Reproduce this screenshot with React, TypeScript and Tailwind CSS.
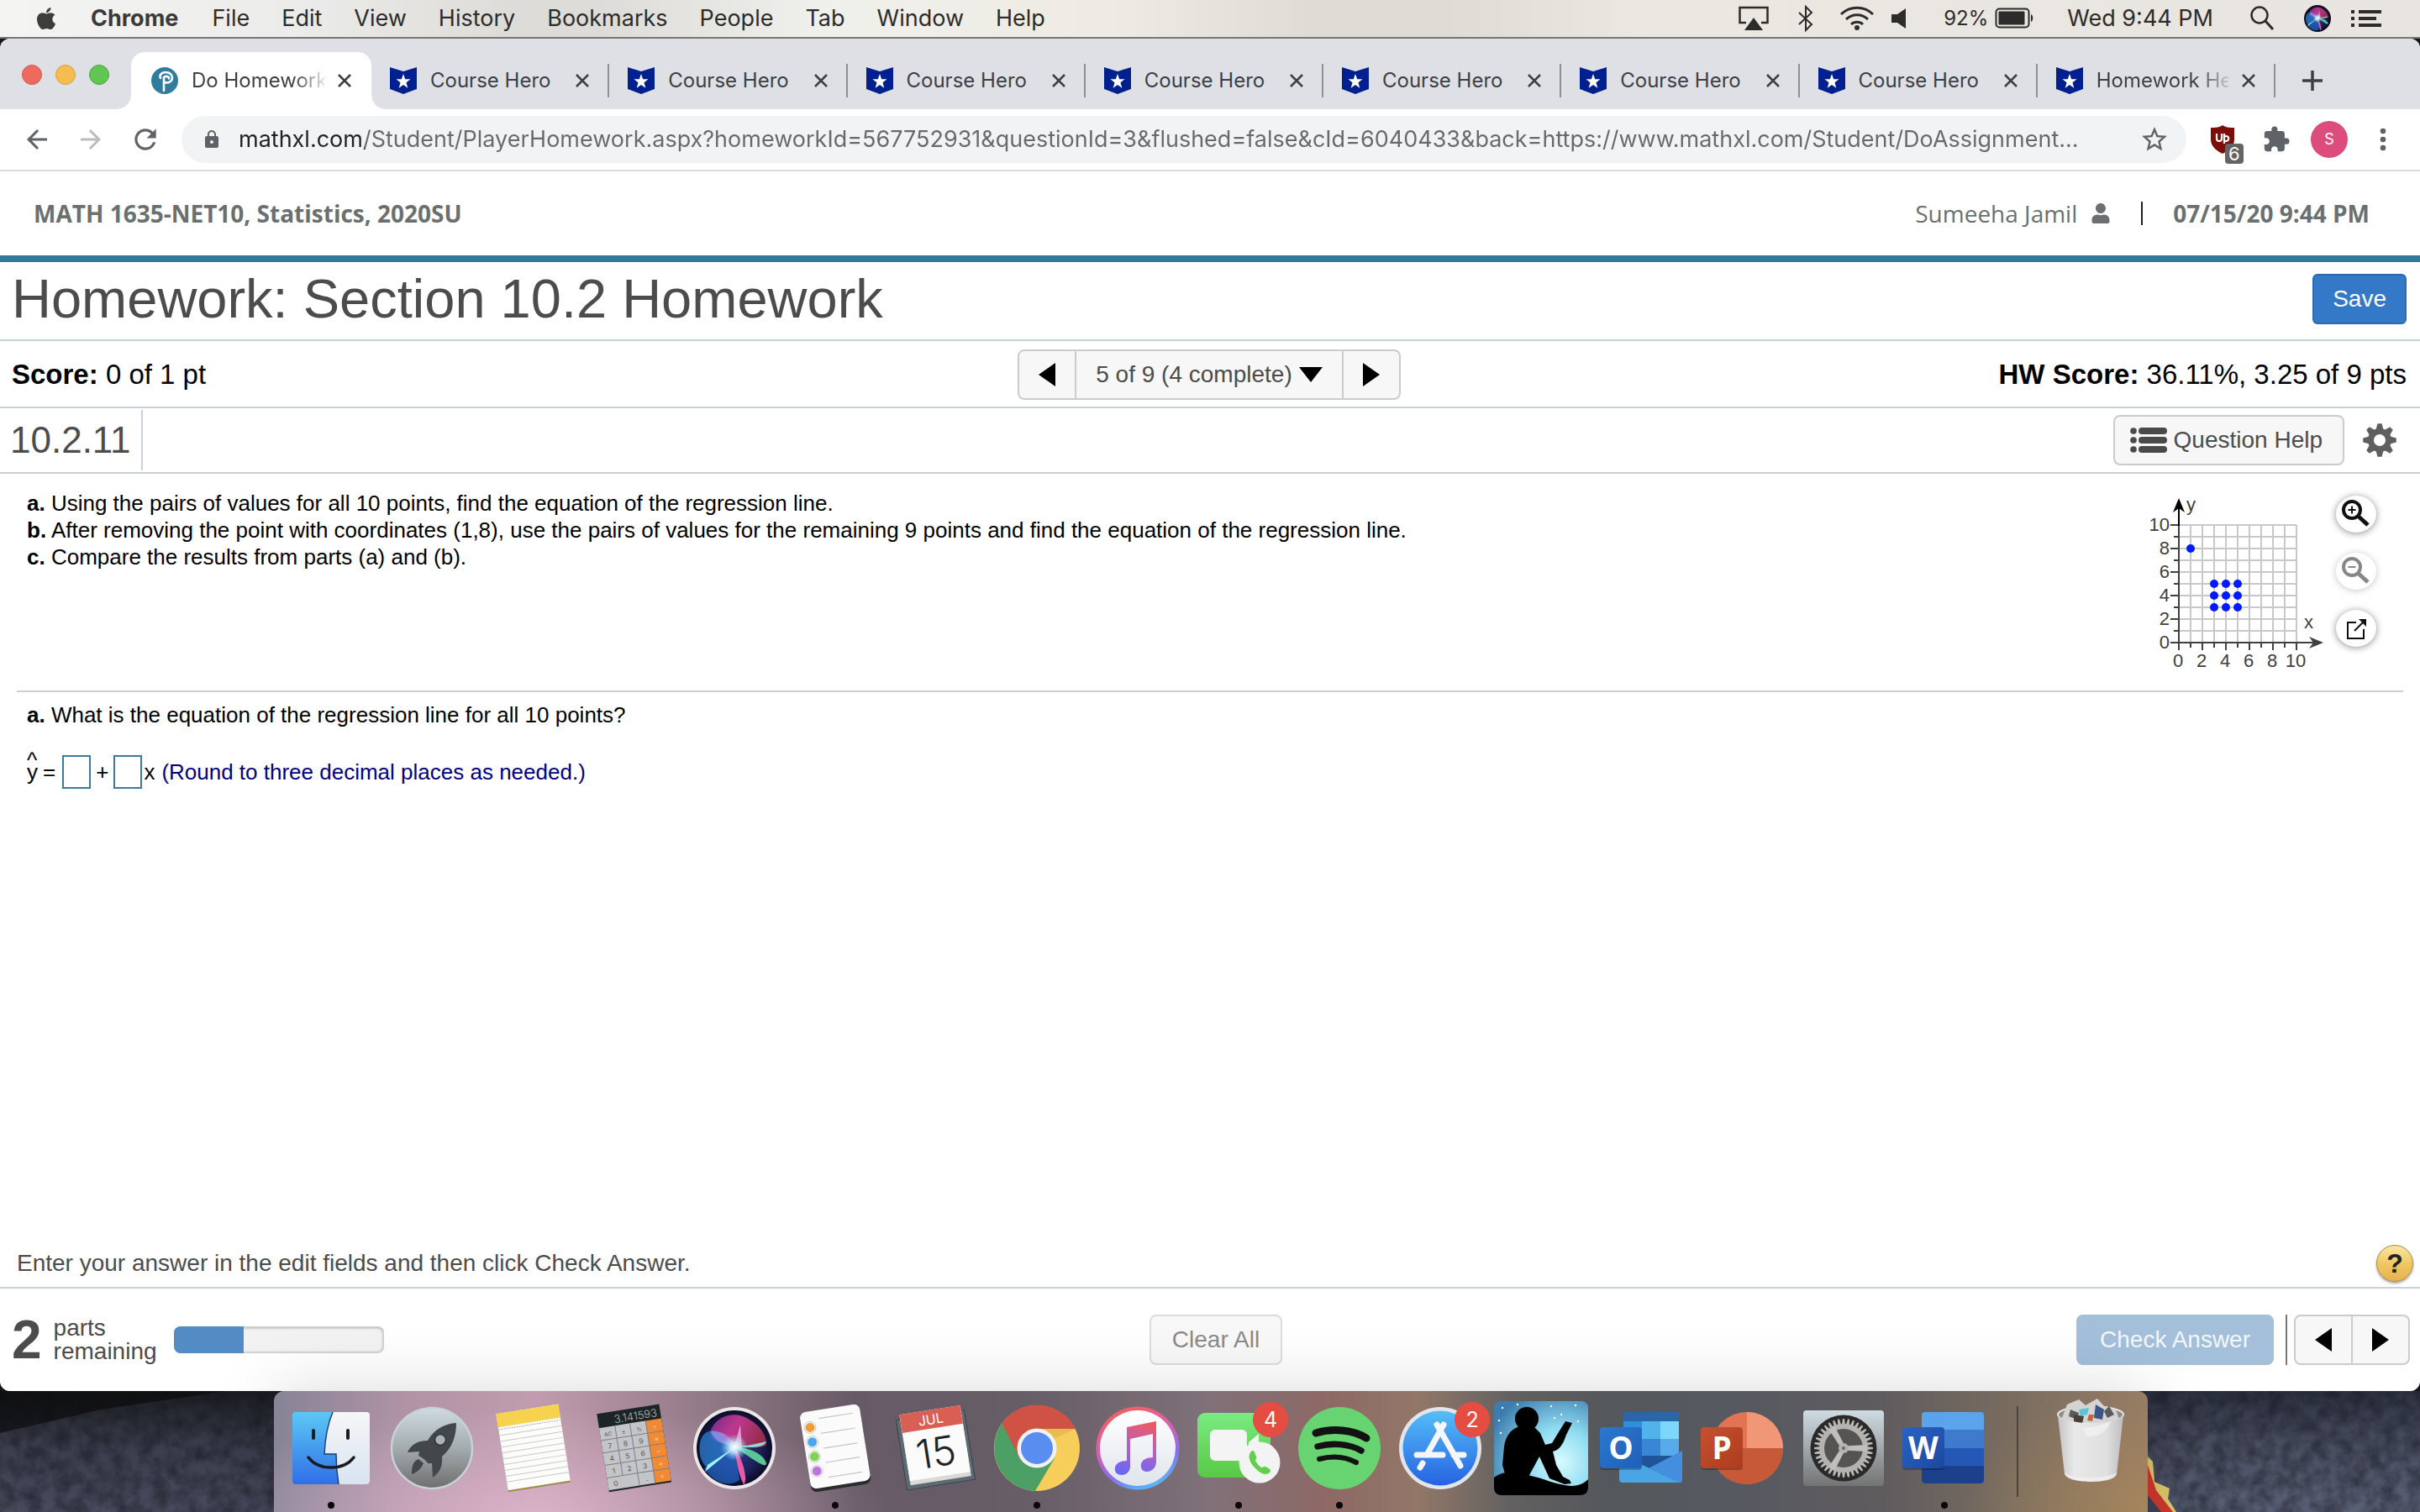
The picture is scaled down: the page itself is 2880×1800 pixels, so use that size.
import type { ReactNode } from "react";
import { FaApple, FaUser } from "react-icons/fa";
import { MdExtension, MdLock, MdStarBorder, MdRefresh, MdArrowBack, MdArrowForward } from "react-icons/md";

/* ---------- small shared drawings ---------- */

function SiriOrb({ id }: { id: string }) {
  return (
    <g>
      <defs>
        <radialGradient id={`${id}-a`} cx="50%" cy="50%" r="50%">
          <stop offset="0" stopColor="#2c3f8f" />
          <stop offset="0.7" stopColor="#1b1f55" />
          <stop offset="1" stopColor="#0c0b26" />
        </radialGradient>
        <radialGradient id={`${id}-b`} cx="50%" cy="50%" r="50%">
          <stop offset="0" stopColor="#fff" />
          <stop offset="0.35" stopColor="#d8f6ff" stopOpacity="0.85" />
          <stop offset="1" stopColor="#8fd8ff" stopOpacity="0" />
        </radialGradient>
        <linearGradient id={`${id}-c`} x1="0" y1="0" x2="1" y2="0.4">
          <stop offset="0" stopColor="#7a2c8f" />
          <stop offset="0.5" stopColor="#cf3a94" />
          <stop offset="1" stopColor="#a5304f" />
        </linearGradient>
      </defs>
      <circle cx="60" cy="68" r="45" fill={`url(#${id}-a)`} />
      <path d="M31 50C36 30 60 22 78 34c12 7 20 18 20 29 0 5-20 5-38 3C50 62 34 64 31 50Z" fill={`url(#${id}-c)`} opacity="0.9" />
      <path d="M20 58c4-12 16-14 26-6l14 16-34 22C18 82 17 68 20 58Z" fill="#2a7fd0" opacity="0.75" />
      <path d="M24 92 60 66l6 40c-14 10-32 2-42-14Z" fill="#2467c9" opacity="0.7" />
      <path d="M60 66c18 2 34 8 38 20 0 6-10 0-38-20Z" fill="#5fd7a0" opacity="0.9" />
      <path d="M60 66c14 0 30-4 38-6-2 8-20 8-38 6Z" fill="#8fe9df" opacity="0.9" />
      <path d="M60 66c2 16 5 34 11 45 4-2 3-22-11-45Z" fill="#e65aa8" />
      <path d="M60 66 67 40l2 28Z" fill="#f2b4e4" opacity="0.8" />
      <path d="M62 66 25 96l3-8Z" fill="#9ff3ff" />
      <path d="M32 48c14-2 26 8 28 18-12-2-24-6-28-18Z" fill="#b9a3f0" opacity="0.55" />
      <circle cx="60" cy="67" r="16" fill={`url(#${id}-b)`} />
    </g>
  );
}

function Banner() {
  return (
    <svg viewBox="0 0 32 32" className="size-8 shrink-0" aria-hidden="true">
      <path d="M0 0 16 5 32 0V26L16 32 0 26Z" fill="#00208f" />
      <path d="m16 8 2.2 6.3h6.3l-5 4 1.8 6.4L16 21l-5.300 3.700 1.800-6.400-5-4h6.300Z" fill="#fff" />
    </svg>
  );
}

function Triangle({ dir, className }: { dir: "left" | "right" | "down"; className: string }) {
  const d = dir === "left" ? "M20 0V28L0 14Z" : dir === "right" ? "M0 0V28L20 14Z" : "M0 0H28L14 18Z";
  return (
    <svg viewBox={dir === "down" ? "0 0 28 18" : "0 0 20 28"} className={className} aria-hidden="true">
      <path d={d} fill="#000" />
    </svg>
  );
}

/* ---------- menu bar ---------- */

const menus = ["File", "Edit", "View", "History", "Bookmarks", "People", "Tab", "Window", "Help"];

function MenuBar() {
  return (
    <header className="flex h-11 items-center bg-[linear-gradient(90deg,#f4f4f3_0%,#ececea_12%,#dddcd8_21%,#dddcd8_25%,#f0f1ec_34%,#efeae3_46%,#e1dbd5_54%,#e1dbd5_60%,#ebe7e1_68%,#e8e5e1_100%)] pl-10 pr-[46px] text-[27px] leading-8 text-[#2d2c2b]">
      <FaApple className="size-[30px] text-[#3d3d3d]" />
      <nav className="ml-[38px] flex items-center gap-[38px]">
        <button className="mr-0.5 font-bold text-[#3a3a39]">Chrome</button>
        {menus.map((m) => (
          <button key={m}>{m}</button>
        ))}
      </nav>
      <div className="ml-auto flex items-center">
        <svg viewBox="0 0 36 30" className="h-[30px] w-9" aria-hidden="true">
          <path d="M9 20H1.500V2H34.500V20H27" fill="none" stroke="#2d2c2b" strokeWidth="2.500" />
          <path d="M18 14 29 29H7Z" fill="#2d2c2b" />
        </svg>
        <svg viewBox="0 0 20 32" className="ml-[34px] h-8 w-5" aria-hidden="true">
          <path d="m2 9 15 14-7 7V2l7 7L2 23" fill="none" stroke="#2d2c2b" strokeWidth="2" />
        </svg>
        <svg viewBox="0 0 42 30" className="ml-[30px] h-[30px] w-[42px]" aria-hidden="true">
          <g fill="none" stroke="#2d2c2b" strokeWidth="3">
            <path d="M2 10a27 27 0 0 1 38 0" />
            <path d="M8 16a18.500 18.500 0 0 1 26 0" />
            <path d="M14 22a10 10 0 0 1 14 0" />
          </g>
          <circle cx="21" cy="26" r="3" fill="#2d2c2b" />
        </svg>
        <svg viewBox="0 0 18 26" className="ml-5 h-[26px] w-[18px]" aria-hidden="true">
          <path d="M0 8h7L17 1v24L7 18H0Z" fill="#2d2c2b" />
        </svg>
        <span className="ml-11 text-2xl">92%</span>
        <svg viewBox="0 0 46 26" className="ml-2 h-[26px] w-[46px]" aria-hidden="true">
          <rect x="1.500" y="1.500" width="39" height="22" rx="4" fill="none" stroke="#2d2c2b" strokeWidth="2" />
          <rect x="4.500" y="4.500" width="31" height="16" rx="1" fill="#2d2c2b" />
          <path d="M43 8v9c3-1 3-8 0-9Z" fill="#2d2c2b" />
        </svg>
        <span className="ml-10">Wed 9:44 PM</span>
        <svg viewBox="0 0 28 30" className="ml-11 h-[30px] w-7" aria-hidden="true">
          <circle cx="11" cy="11" r="9.500" fill="none" stroke="#2d2c2b" strokeWidth="2.500" />
          <path d="m18 18 9 10" stroke="#2d2c2b" strokeWidth="3" />
        </svg>
        <svg viewBox="12 20 96 96" className="ml-9 size-8" aria-hidden="true">
          <circle cx="60" cy="68" r="48" fill="#111" />
          <SiriOrb id="menu-siri" />
        </svg>
        <svg viewBox="0 0 36 20" className="ml-6 h-5 w-9" aria-hidden="true">
          <path d="M0 2h4M0 10h4M0 18h4M9 2h27M9 10h21M9 18h27" stroke="#2d2c2b" strokeWidth="4" />
        </svg>
      </div>
    </header>
  );
}

/* ---------- browser tabs and toolbar ---------- */

function CloseMark() {
  return (
    <svg viewBox="0 0 16 16" className="size-4" aria-hidden="true">
      <path d="m1 1 14 14M15 1 1 15" stroke="#3c3f43" strokeWidth="2.500" />
    </svg>
  );
}

const tabs = ["Course Hero", "Course Hero", "Course Hero", "Course Hero", "Course Hero", "Course Hero", "Course Hero", "Homework Help"];

function TabStrip() {
  return (
    <div className="flex h-[84px] items-end bg-[#dee0e6] pl-[26px]">
      <div className="mb-[29px] flex gap-4">
        <span className="size-6 rounded-full border border-[#d8574c] bg-[#ee6a5f]" />
        <span className="size-6 rounded-full border border-[#d9a03c] bg-[#f5bd4f]" />
        <span className="size-6 rounded-full border border-[#4ba73d] bg-[#61c554]" />
      </div>
      <div className="relative ml-[26px] flex h-[68px] w-[286px] items-center rounded-t-2xl bg-white pl-6 pr-6">
        <span className="absolute bottom-0 right-full size-4 bg-[radial-gradient(circle_at_0_0,transparent_15px,white_16px)]" />
        <span className="absolute bottom-0 left-full size-4 bg-[radial-gradient(circle_at_100%_0,transparent_15px,white_16px)]" />
        <svg viewBox="0 0 32 32" className="size-8 shrink-0" aria-hidden="true">
          <circle cx="16" cy="16" r="16" fill="#2f7c9f" />
          <path d="M11 13c-2-4 2-7 6-7 5 0 8 3 8 6.500S21 20 16 18M15 28V12c3-2 6-1 6 1.500" fill="none" stroke="#fff" strokeWidth="2.600" strokeLinecap="round" />
        </svg>
        <button className="ml-4 flex-1 overflow-hidden whitespace-nowrap bg-[linear-gradient(90deg,#3c3f43_76%,transparent_104%)] bg-clip-text text-left text-[24px] leading-8 text-transparent">
          Do Homework
        </button>
        <button aria-label="Close tab" className="ml-4">
          <CloseMark />
        </button>
      </div>
      <div className="flex flex-1">
        {tabs.map((t, i) => (
          <div key={i} className="flex h-[68px] min-w-0 flex-1 items-center pl-[22px]">
            <Banner />
            <button
              className={
                i === 7
                  ? "ml-4 flex-1 overflow-hidden whitespace-nowrap bg-[linear-gradient(90deg,#3c3f43_76%,transparent_104%)] bg-clip-text text-left text-[24px] leading-8 text-transparent"
                  : "ml-4 flex-1 overflow-hidden whitespace-nowrap text-left text-[24px] leading-8 text-[#3c3f43]"
              }
            >
              {t}
            </button>
            <button aria-label="Close tab" className="ml-4">
              <CloseMark />
            </button>
            <span className="ml-[22px] h-10 w-0.5 bg-[#8d9095]" />
          </div>
        ))}
      </div>
      <button aria-label="New tab" className="mb-[22px] ml-8 mr-[116px]">
        <svg viewBox="0 0 24 24" className="size-6" aria-hidden="true">
          <path d="M12 0v24M0 12h24" stroke="#3c3f43" strokeWidth="3.500" />
        </svg>
      </button>
    </div>
  );
}

function Toolbar() {
  return (
    <div className="flex h-[74px] items-center border-b-2 border-[#dadce0] bg-white pl-[26px] pr-10 text-[#5f6368]">
      <button aria-label="Back">
        <MdArrowBack className="size-9" />
      </button>
      <button aria-label="Forward" className="ml-7 text-[#babcbe]">
        <MdArrowForward className="size-9" />
      </button>
      <button aria-label="Reload" className="ml-7">
        <MdRefresh className="size-[38px]" />
      </button>
      <div className="ml-6 flex h-14 flex-1 items-center rounded-full bg-[#f1f3f4] pl-6 pr-5">
        <MdLock className="size-6" />
        <input
          aria-label="Address"
          readOnly
          value="mathxl.com/Student/PlayerHomework.aspx?homeworkId=567752931&questionId=3&flushed=false&cId=6040433&back=https://www.mathxl.com/Student/DoAssignment..."
          className="ml-5 min-w-0 flex-1 bg-[linear-gradient(90deg,#202124_150px,#66696d_150px)] bg-clip-text text-[27px] leading-9 text-transparent outline-none"
        />
        <button aria-label="Bookmark this page">
          <MdStarBorder className="size-9" />
        </button>
      </div>
      <button aria-label="uBlock Origin" className="relative ml-7">
        <svg viewBox="0 0 30 34" className="h-[34px] w-[30px]" aria-hidden="true">
          <path d="M15 0c4 3 9 3 14 3v14c0 8-6 13-14 17C7 30 1 25 1 17V3c5 0 10 0 14-3Z" fill="#7c0d08" />
          <path d="M8 10v6c0 4 6 4 6 0v-6M17 10v12M17 14a3 3 0 1 1 0 4" fill="none" stroke="#fff" strokeWidth="2.200" />
        </svg>
        <span className="absolute -bottom-3 left-[18px] rounded bg-[#646464] px-1 text-[22px] leading-6 text-white">6</span>
      </button>
      <button aria-label="Extensions" className="ml-8">
        <MdExtension className="size-[34px]" />
      </button>
      <button aria-label="Profile" className="ml-6 flex size-11 items-center justify-center rounded-full bg-[#dc4c7c] text-[18px] leading-6 text-white">
        S
      </button>
      <button aria-label="Browser menu" className="ml-[38px]">
        <svg viewBox="0 0 8 28" className="h-7 w-2" aria-hidden="true">
          <circle cx="4" cy="4" r="3.300" fill="#5f6368" />
          <circle cx="4" cy="14" r="3.300" fill="#5f6368" />
          <circle cx="4" cy="24" r="3.300" fill="#5f6368" />
        </svg>
      </button>
    </div>
  );
}

/* ---------- scatter plot ---------- */

const points = [
  [1, 8],
  [3, 3], [4, 3], [5, 3],
  [3, 4], [4, 4], [5, 4],
  [3, 5], [4, 5], [5, 5],
];
const eleven = Array.from({ length: 11 }, (_, i) => i);
const evens = [0, 2, 4, 6, 8, 10];

function ScatterPlot() {
  const ox = 38;
  const oy = 175;
  return (
    <svg viewBox="0 0 215 214" className="h-[214px] w-[215px]" role="img" aria-label="Scatter plot of ten points">
      {eleven.map((i) => (
        <g key={i} stroke="#c8c8c8" strokeWidth="2">
          <path d={`M${ox + i * 14} ${oy}V35`} />
          <path d={`M${ox} ${oy - i * 14}H178`} />
        </g>
      ))}
      <g stroke="#404040" strokeWidth="2">
        <path d={`M28 ${oy}H200M${ox} 184V36`} />
        {eleven.map((i) => (
          <path key={i} d={`M${ox + i * 14} ${oy}v${i % 2 ? 6 : 9}M${ox} ${oy - i * 14}h${i % 2 ? -6 : -10}`} />
        ))}
      </g>
      <path d="M38 36V12" stroke="#000" strokeWidth="2" />
      <path d="M38 3 45 20 38 15 31 20Z" fill="#000" />
      <path d="M210 175 193 182 198 175 193 168Z" fill="#404040" />
      {points.map(([x, y]) => (
        <circle key={`${x}-${y}`} cx={ox + x * 14} cy={oy - y * 14} r="5" fill="#0019ff" />
      ))}
      <g fill="#404040" fontFamily="Liberation Sans, Arial, sans-serif" fontSize="22">
        {evens.map((n) => (
          <text key={n} x="27" y={oy - n * 14 + 7} textAnchor="end">
            {n}
          </text>
        ))}
        {evens.map((n) => (
          <text key={n} x={ox + n * 14 - 1} y="204" textAnchor="middle">
            {n}
          </text>
        ))}
        <text x="47" y="18">y</text>
        <text x="187" y="158">x</text>
      </g>
    </svg>
  );
}

function RoundButton({ label, faded, children }: { label: string; faded?: boolean; children: ReactNode }) {
  return (
    <button
      aria-label={label}
      className={
        faded
          ? "flex h-11 w-12 items-center justify-center rounded-[50%] bg-white opacity-50 shadow-[0_1px_8px_rgba(0,0,0,0.45)]"
          : "flex h-11 w-12 items-center justify-center rounded-[50%] bg-white shadow-[0_1px_8px_rgba(0,0,0,0.45)]"
      }
    >
      <svg viewBox="0 0 34 34" className="size-[34px]" aria-hidden="true">
        {children}
      </svg>
    </button>
  );
}

/* ---------- homework page ---------- */

function ListIcon() {
  return (
    <svg viewBox="0 0 44 30" className="h-[30px] w-11" aria-hidden="true">
      {[4, 15, 26].map((y) => (
        <g key={y} fill="#4a4a4a" stroke="#4a4a4a">
          <circle cx="4" cy={y} r="3.800" stroke="none" />
          <path d={`M14 ${y}H40`} strokeWidth="8" strokeLinecap="round" />
        </g>
      ))}
    </svg>
  );
}

function Gear() {
  return (
    <svg viewBox="0 0 40 40" className="size-10" aria-hidden="true">
      {[0, 45, 90, 135, 180, 225, 270, 315].map((a) => (
        <path key={a} d="M16 9 18 1h4l2 8Z" fill="#5f5f5f" stroke="#5f5f5f" strokeWidth="1.500" transform={`rotate(${a} 20 20)`} />
      ))}
      <circle cx="20" cy="20" r="10.500" fill="none" stroke="#5f5f5f" strokeWidth="7" />
    </svg>
  );
}

function Homework() {
  return (
    <main className="flex flex-1 flex-col rounded-b-xl bg-white font-['Liberation_Sans',Arial,sans-serif] text-black">
      <div className="flex h-[108px] items-center justify-between border-b-8 border-[#31799a] pl-10 pr-[60px] font-['Open_Sans',sans-serif] text-[28px] leading-9 text-[#6a7070]">
        <strong>MATH 1635-NET10, Statistics, 2020SU</strong>
        <div className="flex items-center">
          <a href="#profile" className="flex items-center gap-4">
            Sumeeha Jamil
            <FaUser className="size-6" />
          </a>
          <span className="ml-9 h-7 w-0.5 bg-[#231f20]" />
          <strong className="ml-9">07/15/20 9:44 PM</strong>
        </div>
      </div>

      <div className="flex h-[94px] items-center justify-between border-b-2 border-[#cbd0de] pb-1 pl-3.5 pr-4">
        <h1 className="text-[65px] leading-[72px] text-[#4c4c4c]">Homework: Section 10.2 Homework</h1>
        <button className="h-[60px] rounded-md border-2 border-[#2c69b0] bg-[#3379c7] px-[22px] text-[28px] leading-8 text-white">Save</button>
      </div>

      <div className="grid h-20 grid-cols-[1fr_auto_1fr] items-center border-b-2 border-[#cbd0de] pl-3.5 pr-4 pt-0.5 text-[33px] leading-10">
        <p>
          <strong>Score:</strong> 0 of 1 pt
        </p>
        <div className="flex h-[60px] rounded-lg border-2 border-[#ccc] bg-[#f7f7f7] text-[28px] leading-8 text-[#4c4c4c]">
          <button aria-label="Previous question" className="flex w-[66px] items-center justify-center">
            <Triangle dir="left" className="h-7 w-5" />
          </button>
          <button className="flex items-center gap-2 border-x-2 border-[#ccc] px-[23px]">
            5 of 9 (4 complete)
            <Triangle dir="down" className="h-[18px] w-7" />
          </button>
          <button aria-label="Next question" className="flex w-[66px] items-center justify-center">
            <Triangle dir="right" className="h-7 w-5" />
          </button>
        </div>
        <p className="text-right">
          <strong>HW Score:</strong> 36.11%, 3.25 of 9 pts
        </p>
      </div>

      <div className="flex h-[78px] items-center border-b-2 border-[#cbd0de] pl-3 pr-7">
        <h2 className="flex h-[72px] items-center border-r-2 border-[#cbd0de] pr-3 text-[44px] leading-[48px] text-[#4c4c4c]">10.2.11</h2>
        <button className="ml-auto flex h-[60px] items-center gap-2 rounded-lg border-2 border-[#ccc] bg-[#f7f7f7] pl-[18px] pr-6 text-[28px] leading-8 text-[#4c4c4c]">
          <ListIcon />
          Question Help
        </button>
        <button aria-label="Settings" className="ml-[22px]">
          <Gear />
        </button>
      </div>

      <section className="mx-5 flex h-[260px] justify-between border-b-2 border-[#cbd0de] pl-3 pr-8 text-[26px] leading-8">
        <div className="pt-[19px]">
          <p>
            <strong>a.</strong> Using the pairs of values for all 10 points, find the equation of the regression line.
          </p>
          <p>
            <strong>b.</strong> After removing the point with coordinates (1,8), use the pairs of values for the remaining 9 points and find the equation of the regression line.
          </p>
          <p>
            <strong>c.</strong> Compare the results from parts (a) and (b).
          </p>
        </div>
        <div className="flex items-start gap-2.5 pt-[26px]">
          <ScatterPlot />
          <div className="flex flex-col gap-6">
            <RoundButton label="Zoom in">
              <g fill="none" stroke="#111">
                <circle cx="12" cy="12" r="10" strokeWidth="4" />
                <path d="m20 20 11 10" strokeWidth="5" />
                <path d="M12 7.500v9M7.500 12h9" strokeWidth="2" />
              </g>
            </RoundButton>
            <RoundButton label="Zoom out" faded>
              <g fill="none" stroke="#111">
                <circle cx="12" cy="12" r="10" strokeWidth="4" />
                <path d="m20 20 11 10" strokeWidth="5" />
                <path d="M7.500 12h9" strokeWidth="2" />
              </g>
            </RoundButton>
            <RoundButton label="Open in new window">
              <path d="M17 10H7V29H26V18" fill="none" stroke="#111" strokeWidth="2" />
              <path d="M15 20 26 9" stroke="#111" strokeWidth="2" />
              <path d="M20 6H29V15Z" fill="#111" />
            </RoundButton>
          </div>
        </div>
      </section>

      <section className="px-8 pt-[11px] text-[26px] leading-8">
        <p>
          <strong>a.</strong> What is the equation of the regression line for all 10 points?
        </p>
        <div className="mt-8 flex items-center">
          <span className="relative">
            y<span className="absolute -top-3.5 left-0">^</span>
          </span>
          <span className="ml-1.5">=</span>
          <input aria-label="Intercept" className="ml-2 h-10 w-[34px] border-2 border-[#3a7c9c] bg-white" />
          <span className="mx-1.5">+</span>
          <input aria-label="Slope" className="h-10 w-[34px] border-2 border-[#3a7c9c] bg-white" />
          <span className="ml-0.5">x</span>
          <span className="ml-2 text-[#000080]">(Round to three decimal places as needed.)</span>
        </div>
      </section>

      <div className="mt-auto flex h-[60px] items-center justify-between border-b-2 border-[#cbd0de] pl-5 pr-2 pt-0.5 text-[28px] leading-8 text-[#4c4c4c]">
        <p>Enter your answer in the edit fields and then click Check Answer.</p>
        <button
          aria-label="Help"
          className="flex size-11 items-center justify-center rounded-full border border-[#a98644] bg-[linear-gradient(180deg,#fbe7a4,#f0c862_50%,#e5b352)] text-[32px] font-bold leading-8 text-[#222] shadow-[0_2px_3px_rgba(0,0,0,0.35)]"
        >
          ?
        </button>
      </div>

      <footer className="grid h-[122px] grid-cols-[1fr_auto_1fr] items-center pl-3.5 pr-3 text-[28px] leading-7 text-[#4c4c4c]">
        <div className="flex items-center">
          <strong className="text-[64px] leading-[64px]">2</strong>
          <div className="ml-3.5">
            parts
            <br />
            remaining
          </div>
          <div role="progressbar" aria-label="Parts completed" aria-valuenow={1} aria-valuemin={0} aria-valuemax={3} className="ml-5 h-8 w-[250px] overflow-hidden rounded-lg bg-[#f2f2f2] shadow-[inset_0_0_2px_2px_#cfcfcf,inset_0_2px_3px_#b0b0b0]">
            <div className="h-full w-1/3 bg-[#538bc5]" />
          </div>
        </div>
        <button className="ml-3 h-[60px] rounded-lg border-2 border-[#dcdcdc] bg-[#f8f8f8] px-[25px] leading-8 text-[#8a8a8a]">Clear All</button>
        <div className="flex items-center justify-end">
          <button className="h-[60px] rounded-lg bg-[#a3bfda] px-7 leading-8 text-[#f3f7fb]">Check Answer</button>
          <span className="ml-3.5 h-[60px] w-0.5 bg-[#777]" />
          <div className="ml-2 flex h-[60px] rounded-lg border-2 border-[#ccc] bg-[#f7f7f7]">
            <button aria-label="Previous part" className="flex w-[68px] items-center justify-center border-r-2 border-[#ccc]">
              <Triangle dir="left" className="h-7 w-5" />
            </button>
            <button aria-label="Next part" className="flex w-[66px] items-center justify-center">
              <Triangle dir="right" className="h-7 w-5" />
            </button>
          </div>
        </div>
      </footer>
    </main>
  );
}

/* ---------- dock icons, all drawn on a 120 x 144 board centred at (60, 68) ---------- */

function Badge({ n }: { n: string }) {
  return (
    <g>
      <circle cx="98" cy="34" r="21" fill="#e54d42" />
      <text x="98" y="43" textAnchor="middle" fontFamily="Inter, sans-serif" fontSize="25" fill="#fff">
        {n}
      </text>
    </g>
  );
}

function Finder() {
  return (
    <g>
      <defs>
        <linearGradient id="fd-l" x1="0" y1="0" x2="0" y2="1">
          <stop offset="0" stopColor="#5cc8f5" />
          <stop offset="1" stopColor="#2f6fe8" />
        </linearGradient>
        <linearGradient id="fd-r" x1="0" y1="0" x2="0" y2="1">
          <stop offset="0" stopColor="#f6f6f7" />
          <stop offset="1" stopColor="#d9e4f1" />
        </linearGradient>
      </defs>
      <rect x="14" y="25" width="92" height="86" rx="4" fill="url(#fd-l)" />
      <path d="M62 25h40a4 4 0 0 1 4 4v78a4 4 0 0 1-4 4H69c-2-12-3-24-3-36H52c1-20 4-36 10-50Z" fill="url(#fd-r)" />
      <path d="M62 25c-6 14-9 30-10 50h14c0 12 1 24 3 36" fill="none" stroke="#1d3f78" strokeWidth="1.500" />
      <path d="M39 47v9M80 47v9" stroke="#1b1b1f" strokeWidth="4" strokeLinecap="round" />
      <path d="M33 79c12 16 42 16 54 0" fill="none" stroke="#1b1b1f" strokeWidth="3.500" strokeLinecap="round" />
    </g>
  );
}

function Launchpad() {
  return (
    <g>
      <defs>
        <linearGradient id="lp" x1="0" y1="0" x2="0" y2="1">
          <stop offset="0" stopColor="#cfdbe2" />
          <stop offset="0.5" stopColor="#a3abae" />
          <stop offset="1" stopColor="#6f6f6d" />
        </linearGradient>
      </defs>
      <circle cx="60" cy="68" r="48" fill="url(#lp)" stroke="#c7d2d8" strokeWidth="2.500" />
      <path d="M89 38c-14 1-26 7-34 21-10 0-19 3-24 14l14-1-1 5c4 2 9 5 11 9l5 0 1 17c9-6 12-15 11-25 12-10 17-24 17-40Z" fill="#43464a" />
      <path d="M44 81c-8 3-8 12-8 18 6-2 11-6 14-13Z" fill="#43464a" />
      <circle cx="70" cy="58" r="6.500" fill="#a9b2b6" stroke="#33363a" strokeWidth="1.500" />
    </g>
  );
}

function Notes() {
  return (
    <g transform="rotate(-9 60 67)">
      <rect x="23" y="21" width="75" height="94" fill="#a08a4a" />
      <rect x="23" y="21" width="75" height="92" fill="#fcfcfb" />
      <rect x="23" y="21" width="75" height="16" fill="#f6d24e" />
      <path d="M24 40h73" stroke="#9b9b9b" strokeWidth="1" strokeDasharray="1.500 1.500" />
      {[47, 54, 61, 68, 75, 82, 89, 96, 103].map((y) => (
        <path key={y} d={`M23 ${y}h75`} stroke="#c9c9c9" strokeWidth="1" />
      ))}
    </g>
  );
}

const keyRows = [
  ["AC", "±", "%", "÷"],
  ["7", "8", "9", "×"],
  ["4", "5", "6", "−"],
  ["1", "2", "3", "+"],
  ["0", "", ".", "="],
];

function Calculator() {
  return (
    <g transform="rotate(-9 60 67)" fontFamily="Inter, sans-serif">
      <rect x="23" y="21" width="75" height="94" fill="#1d2426" />
      <rect x="23" y="38" width="56" height="75" fill="#c3c5c9" />
      <rect x="79" y="38" width="19" height="75" fill="#f08a35" />
      <text x="94" y="35" textAnchor="end" fontSize="13" fontWeight="300" fill="#aeb6b8">
        3.141593
      </text>
      <path d="M23 53h75M23 68h75M23 83h75M23 98h75M42 38v60M60 38v75M79 38v75" stroke="#7f7f84" strokeWidth="1" />
      {keyRows.map((row, r) =>
        row.map((k, c) => (
          <text key={`${r}-${c}`} x={32.5 + c * 18.7} y={49 + r * 15} textAnchor="middle" fontSize={r === 0 ? 6.5 : 8.5} fill={c === 3 ? "#fbd3ae" : "#55565a"}>
            {k}
          </text>
        )),
      )}
    </g>
  );
}

function Siri() {
  return (
    <g>
      <circle cx="60" cy="68" r="49" fill="#e9e7e8" />
      <SiriOrb id="dock-siri" />
    </g>
  );
}

function Reminders() {
  const dots = ["#f29b38", "#4ba6ee", "#7fd454", "#bd74dc"];
  return (
    <g transform="rotate(-9 60 67)">
      <rect x="24" y="23" width="72" height="93" rx="7" fill="#2b2b2d" />
      <rect x="24" y="20" width="72" height="92" rx="7" fill="#fbfbfb" />
      {dots.map((c, i) => (
        <g key={c}>
          <circle cx="34" cy={39 + i * 17.5} r="7" fill="#fff" stroke="#bdbdbd" strokeWidth="0.800" />
          <circle cx="34" cy={39 + i * 17.5} r="5.500" fill={c} />
        </g>
      ))}
      <path d="M46 30h41M46 48h41M46 66h41M46 83h41M46 101h41" stroke="#c4c4c4" strokeWidth="1.200" />
    </g>
  );
}

function Calendar() {
  return (
    <g transform="rotate(-9 60 67)" fontFamily="Inter, sans-serif" textAnchor="middle">
      <rect x="18" y="28" width="82" height="84" fill="#5d6a72" stroke="#38424a" strokeWidth="1" />
      <rect x="23" y="23" width="73" height="84" fill="#d9d9d8" />
      <rect x="23" y="22" width="73" height="80" fill="#fbfbfb" />
      <rect x="23" y="22" width="73" height="22" fill="#d95f54" />
      <text x="59" y="39" fontSize="16" fill="#fff">
        JUL
      </text>
      <text x="59" y="90" fontSize="48" fontWeight="300" fill="#222">
        15
      </text>
    </g>
  );
}

function Chrome() {
  return (
    <g>
      <circle cx="60" cy="68" r="51" fill="#f8ce5b" />
      <path d="M60 68 34.500 24A51 51 0 0 0 58 119L81 80Z" fill="#4ca066" />
      <path d="M60 68 18.500 38.500A51 51 0 0 1 106 45H60Z" fill="#cf5245" />
      <path d="M18.500 38.500 39 79 60 68V45Z" fill="#cf5245" />
      <path d="M106 45H60l20 12Z" fill="#dcb24c" opacity="0.6" />
      <circle cx="60" cy="68" r="23.500" fill="#f2f2f2" />
      <circle cx="60" cy="68" r="19" fill="#5a8df0" />
    </g>
  );
}

function Music() {
  return (
    <g>
      <defs>
        <linearGradient id="mu-r" x1="0.300" y1="0" x2="0.700" y2="1">
          <stop offset="0" stopColor="#f2605c" />
          <stop offset="0.400" stopColor="#d860b4" />
          <stop offset="0.700" stopColor="#8a6cf0" />
          <stop offset="1" stopColor="#4fc1f8" />
        </linearGradient>
        <linearGradient id="mu-n" x1="0.600" y1="0" x2="0.400" y2="1">
          <stop offset="0" stopColor="#ef5a62" />
          <stop offset="0.500" stopColor="#b062c8" />
          <stop offset="1" stopColor="#6a67f2" />
        </linearGradient>
        <linearGradient id="mu-f" x1="0" y1="0" x2="0" y2="1">
          <stop offset="0" stopColor="#fff" />
          <stop offset="1" stopColor="#dfe5ec" />
        </linearGradient>
      </defs>
      <circle cx="60" cy="68" r="49.500" fill="url(#mu-r)" />
      <circle cx="60" cy="68" r="45" fill="url(#mu-f)" />
      <path d="M47 43 82 36v48c0 8-6 12-11 12-6 0-8-5-7-9 1-5 6-8 14-8V51L51 57v33c0 6-5 10-10 10-6 0-9-4-8-9s6-8 14-8Z" fill="url(#mu-n)" />
    </g>
  );
}

function FaceTime() {
  return (
    <g>
      <defs>
        <linearGradient id="ft" x1="0" y1="0" x2="0" y2="1">
          <stop offset="0" stopColor="#7bea82" />
          <stop offset="1" stopColor="#58c945" />
        </linearGradient>
      </defs>
      <rect x="11" y="26" width="87" height="77" rx="9" fill="url(#ft)" />
      <rect x="26" y="46" width="44" height="37" rx="6" fill="#f3f4f3" />
      <path d="m72 61 12-10v26L72 69Z" fill="#f3f4f3" />
      <circle cx="85" cy="85" r="24.500" fill="#f2f3f2" />
      <path d="M75 72c-4 4-3 12 4 19 7 8 14 10 18 6 2-2 1-3-1-5l-4-2c-2-1-3 1-5 1-3-2-5-5-7-8 0-2 2-3 1-5l-2-5c-1-2-2-3-4-1Z" fill="#5fcf4c" />
      <Badge n="4" />
    </g>
  );
}

function Spotify() {
  return (
    <g>
      <circle cx="60" cy="68" r="49" fill="#67d471" />
      <g fill="none" stroke="#121212" strokeLinecap="round">
        <path d="M32 50c20-6 44-4 60 6" strokeWidth="9" />
        <path d="M34 66c18-5 38-3 52 5" strokeWidth="7.500" />
        <path d="M36 81c15-4 31-3 44 4" strokeWidth="6" />
      </g>
    </g>
  );
}

function AppStore() {
  return (
    <g>
      <defs>
        <linearGradient id="as" x1="0" y1="0" x2="0" y2="1">
          <stop offset="0" stopColor="#55bdf8" />
          <stop offset="1" stopColor="#2563e2" />
        </linearGradient>
      </defs>
      <circle cx="60" cy="68" r="49" fill="#e2e5ea" />
      <circle cx="60" cy="68" r="44.500" fill="url(#as)" />
      <g stroke="#f4f6f9" strokeLinecap="round" fill="none" strokeWidth="7">
        <path d="M64 40 44 76M56 40 84 89M32 76h31M76 76h12M39 86l-3 5" />
      </g>
      <Badge n="2" />
    </g>
  );
}

function Kindle() {
  return (
    <g>
      <defs>
        <radialGradient id="kd" cx="0.700" cy="0.650" r="0.800">
          <stop offset="0" stopColor="#d8fbff" />
          <stop offset="0.450" stopColor="#8fdcf2" />
          <stop offset="1" stopColor="#3d7cae" />
        </radialGradient>
      </defs>
      <rect x="4" y="12" width="112" height="112" rx="8" fill="url(#kd)" />
      {[[14, 20], [32, 16], [72, 18], [84, 28], [101, 17], [104, 36], [10, 35], [92, 44], [12, 50], [76, 32]].map(([x, y]) => (
        <circle key={`${x}-${y}`} cx={x} cy={y} r="1.200" fill="#fff" />
      ))}
      <path d="M4 103c10-8 26-8 40-3 20 4 34 12 52 13 10 0 16-4 20-8v11a8 8 0 0 1-8 8H12a8 8 0 0 1-8-8Z" fill="#000" />
      <circle cx="43" cy="33" r="14" fill="#000" />
      <path d="m54 26 2 12-6 8-8-2Z" fill="#000" />
      <path d="M34 42c-11 4-16 12-18 24l-2 22 4 14 26 2 14-26 12 26 18 7 8-1-2-4-8-4-8-14-4-16c8-2 12-8 16-20l7-14-8-2-10 16-6 10-8 2-6-14-8-8Z" fill="#000" />
    </g>
  );
}

function LetterTile({ x, letter, from, to }: { x: number; letter: string; from: string; to: string }) {
  const id = `lt-${letter}`;
  return (
    <g>
      <defs>
        <linearGradient id={id} x1="0" y1="0" x2="1" y2="1">
          <stop offset="0" stopColor={from} />
          <stop offset="1" stopColor={to} />
        </linearGradient>
      </defs>
      <rect x={x} y="45" width="50" height="49" rx="4" fill="#000" opacity="0.25" />
      <rect x={x} y="43" width="50" height="49" rx="4" fill={`url(#${id})`} />
      <text x={x + 25} y="81" textAnchor="middle" fontFamily="Open Sans, sans-serif" fontWeight="700" fontSize="37" fill="#fff">
        {letter}
      </text>
    </g>
  );
}

function Outlook() {
  return (
    <g>
      <rect x="38" y="25" width="66" height="70" rx="4" fill="#2f8fdb" />
      <path d="M38 29a4 4 0 0 1 4-4h58a4 4 0 0 1 4 4v7H38Z" fill="#2a66a8" />
      <rect x="60" y="36" width="22" height="21" fill="#52b2ea" />
      <rect x="82" y="36" width="22" height="21" fill="#7bd8fb" />
      <rect x="60" y="57" width="22" height="21" fill="#3a86d6" />
      <rect x="82" y="57" width="22" height="21" fill="#56abe8" />
      <path d="M38 77h66l4-6v8L70 100 34 84Z" fill="#1f5598" />
      <path d="M33 76 108 109H37a4 4 0 0 1-4-4Z" fill="#4aa5e4" />
      <path d="M108 71v34a4 4 0 0 1-4 4L68 92Z" fill="#438fdd" />
      <LetterTile x={10} letter="O" from="#2c78cf" to="#1f5fb8" />
    </g>
  );
}

function PowerPoint() {
  return (
    <g>
      <circle cx="65" cy="68" r="43" fill="#e27453" />
      <path d="M65 68V25a43 43 0 0 1 43 43Z" fill="#f29678" />
      <path d="M22 68h86a43 43 0 0 1-86 0Z" fill="#c55938" />
      <LetterTile x={10} letter="P" from="#c5512f" to="#ac3c1f" />
    </g>
  );
}

function Word() {
  return (
    <g>
      <rect x="33" y="25" width="74" height="85" rx="4" fill="#5ba3ea" />
      <rect x="33" y="46" width="74" height="22" fill="#3e7bce" />
      <rect x="33" y="68" width="74" height="21" fill="#2558b6" />
      <path d="M33 89h74v17a4 4 0 0 1-4 4H37a4 4 0 0 1-4-4Z" fill="#1c408b" />
      <LetterTile x={10} letter="W" from="#2b63c4" to="#1b48a0" />
    </g>
  );
}

function SystemPreferences() {
  const teeth = Array.from({ length: 36 }, (_, i) => i * 10);
  return (
    <g>
      <defs>
        <linearGradient id="sp" x1="0" y1="0" x2="0" y2="1">
          <stop offset="0" stopColor="#cfdce3" />
          <stop offset="1" stopColor="#737373" />
        </linearGradient>
      </defs>
      <rect x="12" y="23" width="96" height="90" rx="4" fill="url(#sp)" />
      <circle cx="60" cy="68" r="39.500" fill="#2a2a2a" />
      {teeth.map((a) => (
        <path key={a} d="m58 40 1-7h2l1 7Z" fill="#b9b8b4" transform={`rotate(${a} 60 68)`} />
      ))}
      <circle cx="60" cy="68" r="26" fill="#555452" stroke="#b4b3af" strokeWidth="6" />
      {[0, 120, 240].map((a) => (
        <path key={a} d="M60 65.500 88 64v8L60 70.500Z" fill="#c0bfbb" transform={`rotate(${a} 60 68)`} />
      ))}
      <circle cx="60" cy="68" r="6" fill="#b4b3af" />
      <circle cx="60" cy="68" r="2" fill="#666" />
    </g>
  );
}

function Trash() {
  return (
    <g>
      <defs>
        <linearGradient id="tr" x1="0" y1="0" x2="1" y2="0">
          <stop offset="0" stopColor="#c4c4c4" />
          <stop offset="0.250" stopColor="#e9e9ea" />
          <stop offset="0.750" stopColor="#dfdfe0" />
          <stop offset="1" stopColor="#bdbdbd" />
        </linearGradient>
      </defs>
      <ellipse cx="60" cy="28" rx="39" ry="10" fill="#8c8c8c" stroke="#e6e6e6" strokeWidth="2" />
      <path d="M26 32 32 16l14-6 8 7 14-8 8 9 14 4 4 12-20 6H40Z" fill="#d6d4d2" />
      <path d="m36 22 10 4-2 8-10-4ZM82 18l6 10-8 4-4-8Z" fill="#5b5b5d" />
      <path d="m66 16 10 6-2 12-10-2Z" fill="#3b5589" />
      <path d="m46 22 12-2-2 8-8 2Z" fill="#5bc5d8" />
      <path d="m58 28 6 0-2 8-6-1Z" fill="#c5633c" />
      <path d="m40 28 12 2-2 9-10-3Z" fill="#4a4038" />
      <path d="M21 29c8 12 70 12 78 0l-8 70c-2 12-58 12-62 0Z" fill="url(#tr)" />
      <path d="M50 44c12 0 26-4 34-8-4 10-14 20-28 18Z" fill="#f3f3f4" opacity="0.700" />
      <path d="M29 97c8 8 52 8 62 0-2 14-58 14-62 0Z" fill="#f0f0f1" opacity="0.800" />
    </g>
  );
}

const apps: { name: string; art: ReactNode; running?: boolean }[] = [
  { name: "Finder", art: <Finder />, running: true },
  { name: "Launchpad", art: <Launchpad /> },
  { name: "Notes", art: <Notes /> },
  { name: "Calculator", art: <Calculator /> },
  { name: "Siri", art: <Siri /> },
  { name: "Reminders", art: <Reminders />, running: true },
  { name: "Calendar", art: <Calendar /> },
  { name: "Google Chrome", art: <Chrome />, running: true },
  { name: "iTunes", art: <Music /> },
  { name: "FaceTime", art: <FaceTime />, running: true },
  { name: "Spotify", art: <Spotify />, running: true },
  { name: "App Store", art: <AppStore /> },
  { name: "Kindle", art: <Kindle /> },
  { name: "Outlook", art: <Outlook /> },
  { name: "PowerPoint", art: <PowerPoint /> },
  { name: "System Preferences", art: <SystemPreferences /> },
  { name: "Word", art: <Word />, running: true },
];

function Dock() {
  return (
    <div className="relative flex h-36 justify-center">
      <svg className="absolute inset-0 h-full w-full" preserveAspectRatio="none" viewBox="0 0 2880 144" aria-hidden="true">
        <defs>
          <linearGradient id="wall" x1="0" y1="0" x2="0" y2="1">
            <stop offset="0" stopColor="#1c1d22" />
            <stop offset="0.450" stopColor="#3a3d4b" />
            <stop offset="1" stopColor="#484b5d" />
          </linearGradient>
          <linearGradient id="wall-r" x1="0" y1="0" x2="0" y2="1">
            <stop offset="0" stopColor="#2c303e" />
            <stop offset="0.400" stopColor="#474c5e" />
            <stop offset="1" stopColor="#5a6076" />
          </linearGradient>
          <filter id="grain" x="0" y="0" width="100%" height="100%" colorInterpolationFilters="sRGB">
            <feTurbulence type="fractalNoise" baseFrequency="0.060" numOctaves="3" seed="4" />
            <feColorMatrix values="0 0 0 0 0.070  0 0 0 0 0.075  0 0 0 0 0.110  0.900 0 0 0 -0.250" />
          </filter>
        </defs>
        <rect width="1440" height="144" fill="url(#wall)" />
        <rect x="1440" width="1440" height="144" fill="url(#wall-r)" />
        <rect width="2880" height="144" filter="url(#grain)" />
        <path d="M0 0H270L120 22 0 50Z" fill="#0b0c0d" opacity="0.700" />
        <path d="M2556 78 2562 84 2564 108 2582 116 2580 128 2590 144H2556Z" fill="#d9c468" />
        <path d="M2556 88 2566 118 2586 144H2556Z" fill="#c8372c" />
        <path d="M2556 124 2572 144H2556Z" fill="#3a3f52" />
      </svg>
      <nav
        aria-label="Dock"
        className="relative ml-0.5 flex h-full rounded-t-xl bg-[radial-gradient(ellipse_420px_130px_at_320px_150px,rgba(232,190,215,0.65),transparent),radial-gradient(ellipse_220px_160px_at_2230px_150px,rgba(175,140,85,0.6),transparent),linear-gradient(90deg,#868496_0%,#b093a5_7%,#c19cae_14%,#8d7683_24%,#675a66_31%,#665d66_40%,#80717a_50%,#8d6865_56%,#927768_61%,#626161_66%,#54575b_71%,#565960_78%,#605c5e_86%,#7a6d60_93%,#957b66_100%)] px-2 shadow-[0_0_80px_rgba(0,0,0,0.15)]"
      >
        {apps.map((a) => (
          <button key={a.name} aria-label={a.name} className="h-36 w-[120px]">
            <svg viewBox="0 0 120 144" className="h-36 w-[120px]" aria-hidden="true">
              {a.art}
              {a.running && <circle cx="60" cy="136" r="4" fill="#0d0709" />}
            </svg>
          </button>
        ))}
        <span className="ml-[26px] mt-[18px] h-[108px] w-0.5 bg-[#4d443c]" />
        <button aria-label="Trash" className="ml-[26px] h-36 w-[120px]">
          <svg viewBox="0 0 120 144" className="h-36 w-[120px]" aria-hidden="true">
            <Trash />
          </svg>
        </button>
      </nav>
    </div>
  );
}

export default function App() {
  return (
    <div className="flex min-h-screen flex-col overflow-hidden bg-[#15161b] font-['Inter',sans-serif]">
      <MenuBar />
      <div className="h-0.5 bg-[#777671]" />
      <div className="flex flex-1 flex-col overflow-hidden rounded-xl bg-white">
        <TabStrip />
        <Toolbar />
        <Homework />
      </div>
      <Dock />
    </div>
  );
}
